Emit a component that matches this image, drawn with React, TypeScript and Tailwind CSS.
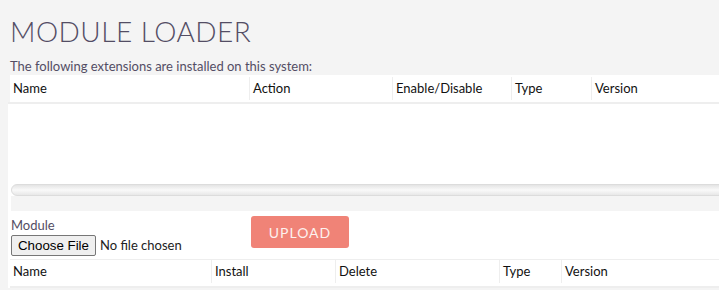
const font = "font-['Lato','Noto_Sans',sans-serif]";

const installedCols = [
  { label: "Name", w: "w-[239px]" },
  { label: "Action", w: "w-[143px]" },
  { label: "Enable/Disable", w: "w-[119px]" },
  { label: "Type", w: "w-[80px]" },
  { label: "Version", w: "flex-1" },
];

const uploadCols = [
  { label: "Name", w: "w-[201px]" },
  { label: "Install", w: "w-[124px]" },
  { label: "Delete", w: "w-[164px]" },
  { label: "Type", w: "w-[62px]" },
  { label: "Version", w: "flex-1" },
];

function HeaderRow({ cols, row }: { cols: { label: string; w: string }[]; row: string }) {
  return (
    <div className={`flex ${row}`}>
      {cols.map((c, i) => (
        <div
          key={c.label}
          className={`${c.w} h-[23px] flex items-center pl-[3px] text-[13px] text-[#111] ${
            i > 0 ? "border-l border-[#eeeeee]" : ""
          }`}
        >
          {c.label}
        </div>
      ))}
    </div>
  );
}

export default function App() {
  return (
    <div className={`${font} bg-[#f4f4f4] h-[290px] w-[719px] overflow-hidden`}>
      <h1 className="pl-[10px] pt-[15px] text-[28px] leading-[32px] font-light tracking-[0.5px] text-[#534d64]">
        MODULE LOADER
      </h1>
      <p className="pl-[10px] mt-[11px] text-[13px] leading-[16px] text-[#534d64]">
        The following extensions are installed on this system:
      </p>

      <div className="ml-[8px] mt-[1px]">
        <div className="ml-[2px] bg-white">
          <HeaderRow cols={installedCols} row="h-[27px] items-center" />
        </div>
        <div className="bg-white border-t-2 border-[#eeeeee] pl-[3px]">
          <div className="h-[80px]" />
          <div className="-mr-[20px] h-[12px] rounded-full border border-[#dcdcdc] bg-gradient-to-b from-[#e4e4e4] via-[#f9f9f9] to-[#e8e8e8]" />
          <div className="h-[15px] bg-[#f4f4f4]" />

          <div className="flex pt-[5px]">
            <div className="w-[240px]">
              <div className="text-[13px] leading-[16px] text-[#534d64] pt-[1px]">Module</div>
              <div className="flex items-center mt-[2px]">
                <span className="h-[21px] px-[6px] flex items-center border border-[#767676] rounded-[2px] bg-[#efefef] text-[13.3px] text-black font-['Liberation_Sans',Arial,sans-serif]">
                  Choose File
                </span>
                <span className="ml-[4px] text-[13px] text-[#222]">No file chosen</span>
              </div>
            </div>
            <button className="w-[98px] h-[32px] rounded-[3px] bg-[#f08377] text-[14px] tracking-[1px] text-[#fdf1ee]">
              UPLOAD
            </button>
          </div>

          <div className="mt-[3px] -ml-[1px] border-t border-[#eeeeee] border-b-2">
            <HeaderRow cols={uploadCols} row="h-[26px] items-start" />
          </div>
        </div>
      </div>
    </div>
  );
}
